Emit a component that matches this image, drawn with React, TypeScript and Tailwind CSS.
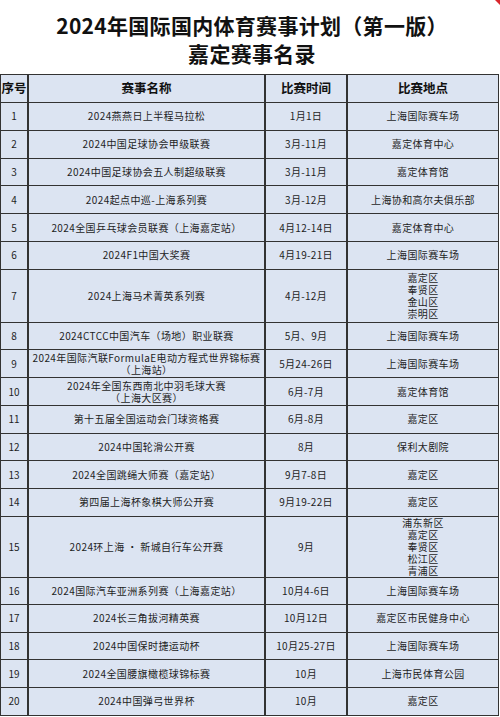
import React from 'react';

type Row = {
  no: number;
  name: string[];
  time: string;
  place: string[];
  h: string;
};

const ROWS: Row[] = [
  { no: 1, name: ['2024燕燕日上半程马拉松'], time: '1月1日', place: ['上海国际赛车场'], h: 'h-[27.8px]' },
  { no: 2, name: ['2024中国足球协会甲级联赛'], time: '3月-11月', place: ['嘉定体育中心'], h: 'h-[27.8px]' },
  { no: 3, name: ['2024中国足球协会五人制超级联赛'], time: '3月-11月', place: ['嘉定体育馆'], h: 'h-[27.8px]' },
  { no: 4, name: ['2024起点中巡-上海系列赛'], time: '3月-12月', place: ['上海协和高尔夫俱乐部'], h: 'h-[27.8px]' },
  { no: 5, name: ['2024全国乒乓球会员联赛（上海嘉定站）'], time: '4月12-14日', place: ['嘉定体育中心'], h: 'h-[27.8px]' },
  { no: 6, name: ['2024F1中国大奖赛'], time: '4月19-21日', place: ['上海国际赛车场'], h: 'h-[27.8px]' },
  { no: 7, name: ['2024上海马术菁英系列赛'], time: '4月-12月', place: ['嘉定区', '奉贤区', '金山区', '崇明区'], h: 'h-[53px]' },
  { no: 8, name: ['2024CTCC中国汽车（场地）职业联赛'], time: '5月、9月', place: ['上海国际赛车场'], h: 'h-[27.7px]' },
  { no: 9, name: ['2024年国际汽联FormulaE电动方程式世界锦标赛', '（上海站）'], time: '5月24-26日', place: ['上海国际赛车场'], h: 'h-[27.7px]' },
  { no: 10, name: ['2024年全国东西南北中羽毛球大赛', '（上海大区赛）'], time: '6月-7月', place: ['嘉定体育馆'], h: 'h-[27.7px]' },
  { no: 11, name: ['第十五届全国运动会门球资格赛'], time: '6月-8月', place: ['嘉定区'], h: 'h-[27.7px]' },
  { no: 12, name: ['2024中国轮滑公开赛'], time: '8月', place: ['保利大剧院'], h: 'h-[27.7px]' },
  { no: 13, name: ['2024全国跳绳大师赛（嘉定站）'], time: '9月7-8日', place: ['嘉定区'], h: 'h-[27.7px]' },
  { no: 14, name: ['第四届上海杯象棋大师公开赛'], time: '9月19-22日', place: ['嘉定区'], h: 'h-[27.7px]' },
  { no: 15, name: ['2024环上海 · 新城自行车公开赛'], time: '9月', place: ['浦东新区', '嘉定区', '奉贤区', '松江区', '青浦区'], h: 'h-[61px]' },
  { no: 16, name: ['2024国际汽车亚洲系列赛（上海嘉定站）'], time: '10月4-6日', place: ['上海国际赛车场'], h: 'h-[27.6px]' },
  { no: 17, name: ['2024长三角拔河精英赛'], time: '10月12日', place: ['嘉定区市民健身中心'], h: 'h-[27.6px]' },
  { no: 18, name: ['2024中国保时捷运动杯'], time: '10月25-27日', place: ['上海国际赛车场'], h: 'h-[27.6px]' },
  { no: 19, name: ['2024全国腰旗橄榄球锦标赛'], time: '10月', place: ['上海市民体育公园'], h: 'h-[27.6px]' },
  { no: 20, name: ['2024中国弹弓世界杯'], time: '10月', place: ['嘉定区'], h: 'h-[27.6px]' },
];

const cell = 'flex flex-col items-center justify-center text-center border-b border-[#333]';

const App: React.FC = () => {
  return (
    <div className="relative w-[500px] h-[717px] bg-white overflow-hidden font-['Noto_Sans_CJK_SC',sans-serif] text-[#1e1e1e]">
      {/* comment marker in the corner */}
      <div className="absolute top-0 right-0 w-0 h-0 border-l-[5px] border-l-transparent border-t-[5px] border-t-[#d9262c]" />

      {/* Title */}
      <header className="h-[74px] flex flex-col items-center pl-[4px] pt-[11px]">
        <h1 className="text-[21px] leading-[28px] font-bold text-[#111] tracking-[0.3px]">
          2024年国际国内体育赛事计划（第一版）
        </h1>
        <h2 className="text-[21px] leading-[28px] font-bold text-[#111] tracking-[0.3px]">嘉定赛事名录</h2>
      </header>

      {/* Table */}
      <div className="w-[499px] border-l border-t border-r border-[#333] bg-[#dce4f2]">
        <div className="grid grid-cols-[28px_237px_82px_1fr] h-[28px] text-[12.5px] font-bold text-[#111]">
          <div className={`${cell} border-r-2`}>序号</div>
          <div className={`${cell} border-r-2`}>赛事名称</div>
          <div className={`${cell} border-r-2`}>比赛时间</div>
          <div className={cell}>比赛地点</div>
        </div>
        {ROWS.map((r) => (
          <div key={r.no} className={`grid grid-cols-[28px_237px_82px_1fr] ${r.h} text-[10px] leading-[12px]`}>
            <div className={`${cell} border-r-2`}>{r.no}</div>
            <div className={`${cell} border-r-2 tracking-[0.4px]`}>
              {r.name.map((t) => (
                <span key={t}>{t}</span>
              ))}
            </div>
            <div className={`${cell} border-r-2 tracking-[0.3px]`}>{r.time}</div>
            <div className={`${cell} tracking-[0.4px]`}>
              {r.place.map((t) => (
                <span key={t}>{t}</span>
              ))}
            </div>
          </div>
        ))}
      </div>
    </div>
  );
};

export default App;
